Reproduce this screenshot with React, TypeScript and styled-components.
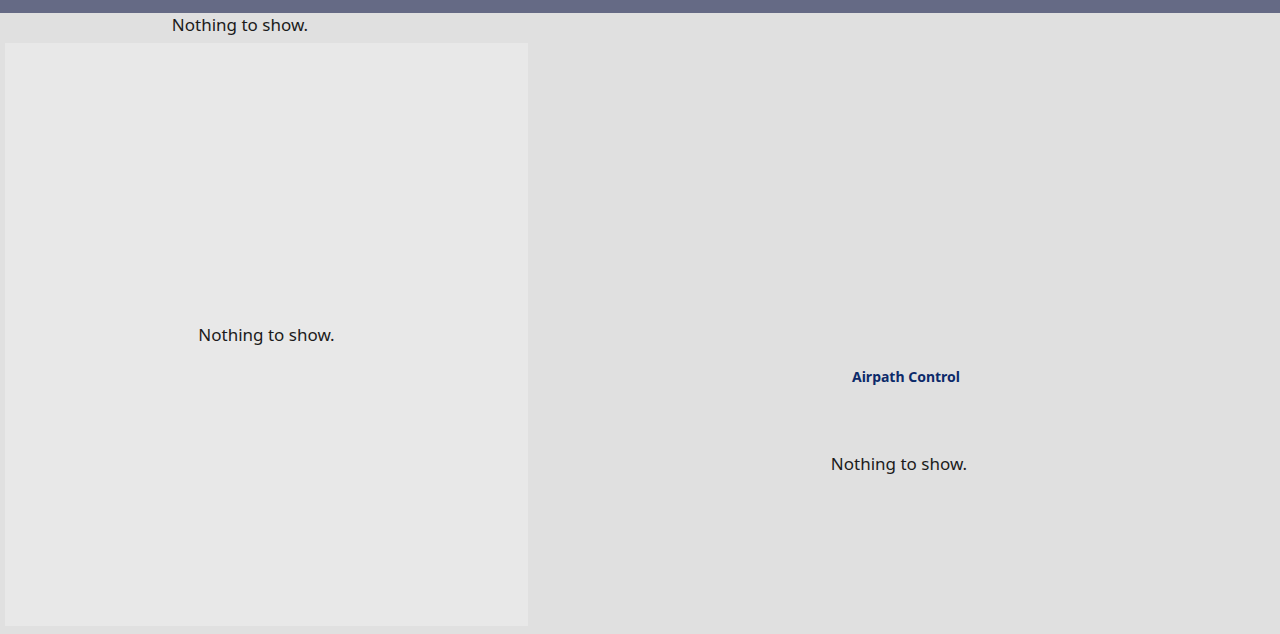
import React from "react";
import styled, { createGlobalStyle } from "styled-components";

const Global = createGlobalStyle`
  html, body { margin: 0; padding: 0; }
  body {
    background: #e0e0e0;
    font-family: "Noto Sans", "Open Sans", sans-serif;
    color: #1b1b1b;
    overflow: hidden;
  }
`;

const Page = styled.div`
  width: 1280px;
  height: 634px;
  display: flex;
  flex-direction: column;
  background: #e0e0e0;
`;

const TopBar = styled.div`
  height: 13px;
  background: #656a85;
  flex: none;
`;

const Main = styled.div`
  flex: 1;
  display: flex;
  min-height: 0;
`;

const LeftColumn = styled.div`
  width: 528px;
  display: flex;
  flex-direction: column;
  padding-bottom: 8px;
`;

const Caption = styled.div`
  width: 480px;
  height: 30px;
  display: flex;
  align-items: center;
  justify-content: center;
  padding-bottom: 7px;
  box-sizing: border-box;
`;

const Empty = styled.span`
  font-size: 17px;
  letter-spacing: 0;
  color: #1b1b1b;
`;

const Panel = styled.div`
  margin-left: 5px;
  flex: 1;
  background: #e8e8e8;
  display: flex;
  align-items: center;
  justify-content: center;
  padding-top: 0px;
`;

const RightColumn = styled.div`
  flex: 1;
  display: flex;
  flex-direction: column;
  align-items: center;
  padding-top: 354px;
`;

const Title = styled.div`
  font-size: 14px;
  font-weight: 700;
  color: #0c2a6a;
  margin-left: 4px;
  line-height: 20px;
`;

const RightEmpty = styled.div`
  margin-top: 65px;
  margin-left: -10px;
  line-height: 24px;
`;

export default function App() {
  return (
    <>
      <Global />
      <Page>
        <TopBar />
        <Main>
          <LeftColumn>
            <Caption>
              <Empty>Nothing to show.</Empty>
            </Caption>
            <Panel>
              <Empty>Nothing to show.</Empty>
            </Panel>
          </LeftColumn>
          <RightColumn>
            <Title>Airpath Control</Title>
            <RightEmpty>
              <Empty>Nothing to show.</Empty>
            </RightEmpty>
          </RightColumn>
        </Main>
      </Page>
    </>
  );
}
